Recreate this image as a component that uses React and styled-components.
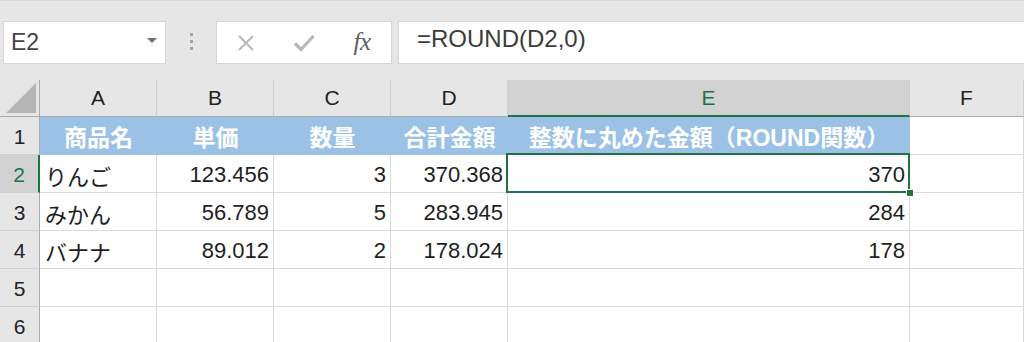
import React from "react";
import styled, { createGlobalStyle, css } from "styled-components";

const GlobalStyle = createGlobalStyle`
  html, body { margin: 0; padding: 0; background: #fff; }
  body {
    font-family: "Liberation Sans", "Noto Sans CJK JP", sans-serif;
    overflow: hidden;
  }
  * { box-sizing: border-box; }
`;

const GREEN = "#217346";

const Window = styled.div`
  width: 1024px;
  height: 342px;
  overflow: hidden;
  background: #fff;
`;

const FormulaBar = styled.div`
  height: 80px;
  background: #e6e6e6;
  border-top: 1px solid #d9d9d9;
  display: flex;
  align-items: flex-start;
  padding-top: 20px;
`;

const Box = styled.div`
  height: 43px;
  background: #fff;
  border: 1px solid #d6d6d6;
  display: flex;
  align-items: center;
`;

const NameBox = styled(Box)`
  margin-left: 3px;
  width: 163px;
  justify-content: space-between;
  padding: 0 8px 0 7px;
  font-size: 23px;
  color: #454545;
`;

const Caret = styled.span`
  width: 0;
  height: 0;
  border-left: 5px solid transparent;
  border-right: 5px solid transparent;
  border-top: 5px solid #707070;
  margin-top: -4px;
`;

const Grip = styled.div`
  width: 50px;
  height: 43px;
  display: flex;
  flex-direction: column;
  align-items: center;
  justify-content: center;
  gap: 4px;
  padding-bottom: 3px;
`;

const GripDot = styled.span`
  width: 3px;
  height: 3px;
  background: #a3a3a3;
`;

const ButtonBox = styled(Box)`
  width: 176px;
`;

const IconSlot = styled.div`
  flex: 1;
  display: flex;
  justify-content: center;
  align-items: center;
`;

const Fx = styled.span`
  font-family: "Liberation Serif", "DejaVu Serif", serif;
  font-style: italic;
  font-size: 25px;
  color: #5e5e5e;
  margin-top: -2px;
  letter-spacing: -0.5px;
`;

const FormulaInput = styled(Box)`
  margin-left: 6px;
  flex: 1;
  border-right: none;
  padding: 0 0 8px 18px;
  font-size: 24px;
  color: #3c3c3c;
`;

const Sheet = styled.div`
  display: grid;
  grid-template-columns: 40px 117px 117px 117px 117px 402px 114px;
  grid-template-rows: 37px;
  grid-auto-rows: 38px;
`;

const Corner = styled.div`
  background: #e6e6e6;
  border-right: 1px solid #ababab;
  border-bottom: 1px solid #ababab;
  display: flex;
  align-items: flex-end;
  justify-content: flex-end;
  padding: 0 2px 2px 0;
`;

const ColHeader = styled.div`
  background: ${(p) => (p.$selected ? "#d2d2d2" : "#e6e6e6")};
  color: ${(p) => (p.$selected ? GREEN : "#222")};
  border-right: 1px solid #cdcdcd;
  border-bottom: ${(p) => (p.$selected ? `2px solid ${GREEN}` : "1px solid #ababab")};
  display: flex;
  align-items: center;
  justify-content: center;
  font-size: 21px;
  padding-top: ${(p) => (p.$selected ? "1px" : "0")};
`;

const RowHeader = styled.div`
  background: ${(p) => (p.$selected ? "#d2d2d2" : "#e6e6e6")};
  color: ${(p) => (p.$selected ? GREEN : "#222")};
  border-right: ${(p) => (p.$selected ? `2px solid ${GREEN}` : "1px solid #ababab")};
  border-bottom: 1px solid #d0d0d0;
  display: flex;
  align-items: center;
  justify-content: center;
  font-size: 21px;
  padding-top: 2px;
`;

const Cell = styled.div`
  position: relative;
  border-right: 1px solid #dadada;
  border-bottom: 1px solid #dadada;
  display: flex;
  align-items: center;
  justify-content: ${(p) => (p.$align === "right" ? "flex-end" : p.$align === "center" ? "center" : "flex-start")};
  padding: 2px 4px 0 5px;
  font-size: 22px;
  color: #1e1e1e;
  white-space: nowrap;
  ${(p) =>
    p.$head &&
    css`
      background: #9bc2e6;
      border-right-color: #9bc2e6;
      border-bottom-color: #9bc2e6;
      color: #fff;
      font-weight: bold;
      font-size: 23px;
      padding-top: 0;
    `}
  ${(p) =>
    p.$active &&
    css`
      &::after {
        content: "";
        position: absolute;
        left: -2px;
        top: -2px;
        right: -1px;
        bottom: -1px;
        border: 2px solid ${GREEN};
        pointer-events: none;
      }
    `}
`;

const FillHandle = styled.span`
  position: absolute;
  right: -5px;
  bottom: -5px;
  width: 8px;
  height: 8px;
  background: ${GREEN};
  border: 1px solid #fff;
  z-index: 2;
`;

const columns = ["A", "B", "C", "D", "E", "F"];

const rows = [
  { head: true, cells: ["商品名", "単価", "数量", "合計金額", "整数に丸めた金額（ROUND関数）", ""] },
  { cells: ["りんご", "123.456", "3", "370.368", "370", ""] },
  { cells: ["みかん", "56.789", "5", "283.945", "284", ""] },
  { cells: ["バナナ", "89.012", "2", "178.024", "178", ""] },
  { cells: ["", "", "", "", "", ""] },
  { cells: ["", "", "", "", "", ""] },
];

export default function App() {
  return (
    <Window>
      <GlobalStyle />
      <FormulaBar>
        <NameBox>
          <span>E2</span>
          <Caret />
        </NameBox>
        <Grip>
          <GripDot />
          <GripDot />
          <GripDot />
        </Grip>
        <ButtonBox>
          <IconSlot>
            <svg width="18" height="16" viewBox="0 0 18 16">
              <path d="M2 1 L16 15 M16 1 L2 15" stroke="#b8b8b8" strokeWidth="2" fill="none" />
            </svg>
          </IconSlot>
          <IconSlot>
            <svg width="22" height="18" viewBox="0 0 22 18">
              <path d="M2 9.5 L8 15.5 L20.5 2" stroke="#b8b8b8" strokeWidth="3.2" fill="none" />
            </svg>
          </IconSlot>
          <IconSlot>
            <Fx>fx</Fx>
          </IconSlot>
        </ButtonBox>
        <FormulaInput>=ROUND(D2,0)</FormulaInput>
      </FormulaBar>
      <Sheet>
        <Corner>
          <svg width="32" height="32" viewBox="0 0 32 32">
            <polygon points="31,1 31,31 1,31" fill="#b5b5b5" />
          </svg>
        </Corner>
        {columns.map((c) => (
          <ColHeader key={c} $selected={c === "E"}>
            {c}
          </ColHeader>
        ))}
        {rows.map((r, ri) => (
          <React.Fragment key={ri}>
            <RowHeader $selected={ri === 1}>{ri + 1}</RowHeader>
            {r.cells.map((v, ci) => {
              const isHead = r.head && ci < 5;
              const align = isHead ? "center" : ci === 0 ? "left" : "right";
              const active = ri === 1 && ci === 4;
              return (
                <Cell key={ci} $head={isHead} $align={align} $active={active}>
                  {v}
                  {active && <FillHandle />}
                </Cell>
              );
            })}
          </React.Fragment>
        ))}
      </Sheet>
    </Window>
  );
}
